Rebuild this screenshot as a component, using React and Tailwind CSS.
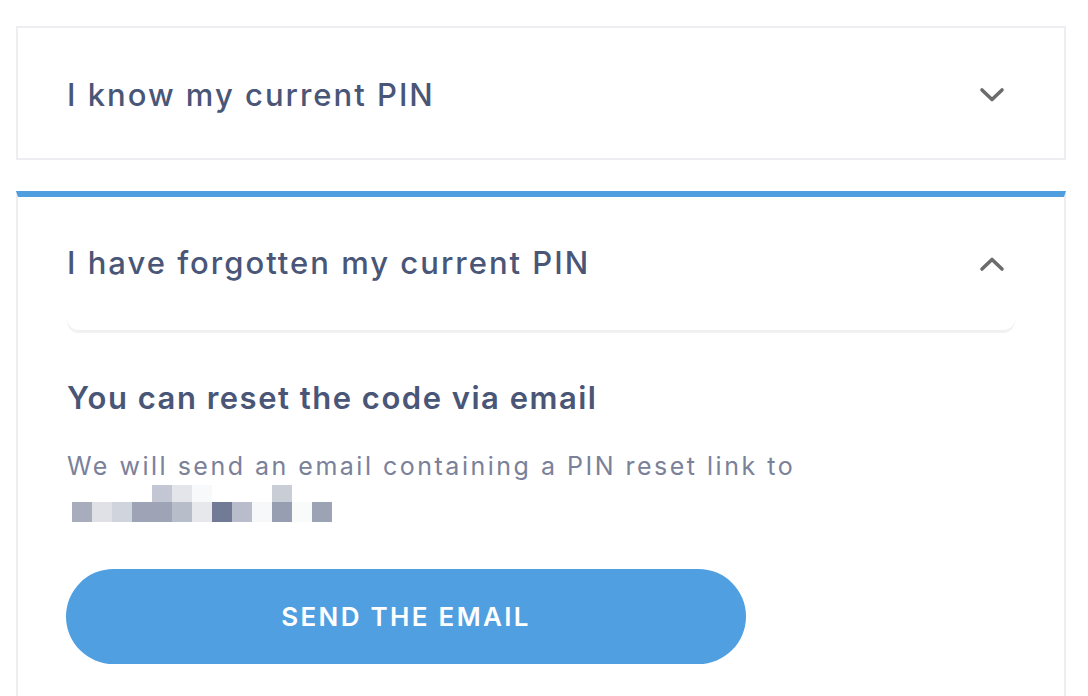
import React from 'react';

const pixelsTop = [
  { x: 152, c: '#c3c7d3' },
  { x: 172, c: '#e3e5eb' },
  { x: 192, c: '#f8f9fb' },
  { x: 272, c: '#c9cdd6' },
];

const pixelsBottom = [
  '#a7adbd', '#dfe1e7', '#d0d4dc', '#9ea3b6', '#9ea4b6', '#b8bdca', '#e6e8ec',
  '#717b96', '#b8bccb', '#f7f8f9', '#979eb2', '#f9fafa', '#9ca3b4',
];

function Chevron({ up }) {
  return (
    <svg width="26" height="16" viewBox="0 0 26 16" fill="none" className="shrink-0">
      <path
        d={up ? 'M3 13 L13 3.5 L23 13' : 'M3 3 L13 12.5 L23 3'}
        stroke="#6b6b6b"
        strokeWidth="3.6"
        strokeLinecap="round"
        strokeLinejoin="round"
      />
    </svg>
  );
}

function BlurredEmail() {
  return (
    <div className="relative h-[38px] mt-[4px]">
      {pixelsTop.map((p, i) => (
        <div
          key={i}
          className="absolute top-0 w-5 h-[18px]"
          style={{ left: p.x - 67, backgroundColor: p.c }}
        />
      ))}
      <div className="absolute top-[17px] left-[5px] flex">
        {pixelsBottom.map((c, i) => (
          <div key={i} className="w-5 h-5" style={{ backgroundColor: c }} />
        ))}
      </div>
    </div>
  );
}

export default function App() {
  return (
    <div
      className="min-h-screen bg-white pl-4 pt-[26px] text-[#4a5677]"
      style={{ fontFamily: 'Inter, "Noto Sans", sans-serif' }}
    >
      <div className="w-[1050px]">
        {/* Collapsed item */}
        <div className="border-2 border-[#ededf2] h-[134px] flex items-center justify-between pl-[49px] pr-[59px] pt-1">
          <span className="text-[31px] font-medium tracking-[2px]">I know my current PIN</span>
          <Chevron />
        </div>

        {/* Expanded item */}
        <div className="mt-[31px] border-2 border-t-[6px] border-[#ededf2] border-t-[#4f9ee0] px-[49px] pb-10">
          <div className="h-[134px] flex items-center justify-between pr-[10px] rounded-b-xl shadow-[0_2px_1px_rgba(0,0,0,0.06)] border-b border-[#efeff3]">
            <span className="text-[31px] font-medium tracking-[2px]">I have forgotten my current PIN</span>
            <Chevron up />
          </div>

          <h2 className="mt-[49px] text-[31px] font-semibold leading-[36px] tracking-[1.5px]">
            You can reset the code via email
          </h2>
          <p className="mt-[35px] text-[25px] leading-[30px] text-[#7a8199] tracking-[2.5px]">
            We will send an email containing a PIN reset link to
          </p>
          <BlurredEmail />

          <button className="mt-[46px] w-[680px] h-[95px] rounded-full bg-[#4f9fe1] text-white text-[26px] font-semibold tracking-[2.3px] -ml-px">
            SEND THE EMAIL
          </button>
        </div>
      </div>
    </div>
  );
}
